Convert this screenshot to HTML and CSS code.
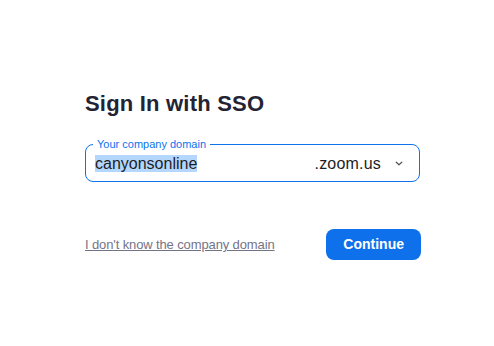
FILE: index.html
```html
<!DOCTYPE html>
<html>
<head>
<meta charset="utf-8">
<link rel="stylesheet" href="styles.css">
</head>
<body>
<main class="panel">
  <h1 class="title">Sign In with SSO</h1>
  <fieldset class="domain">
    <legend class="domain-label">Your company domain</legend>
    <div class="domain-row">
      <span class="domain-value"><span class="selected">canyonsonline</span></span>
      <span class="domain-suffix">.zoom.us</span>
      <svg class="chevron" width="8" height="5" viewBox="0 0 8 5" aria-hidden="true"><path d="M1.2 1.2l2.8 2.6 2.8-2.6" fill="none" stroke="#55555c" stroke-width="1.2" stroke-linecap="round" stroke-linejoin="round"/></svg>
    </div>
  </fieldset>
  <div class="actions">
    <a class="help-link" href="#">I don't know the company domain</a>
    <button class="continue" type="button">Continue</button>
  </div>
</main>
</body>
</html>
```

FILE: styles.css
```css
html, body {
  margin: 0;
  padding: 0;
  background: #ffffff;
}

body {
  font-family: "Liberation Sans", Arial, Helvetica, sans-serif;
  color: #232333;
}

.panel {
  width: 336px;
  margin: 0 0 0 85px;
  padding-top: 91px;
  display: flex;
  flex-direction: column;
}

.title {
  margin: 0;
  font-size: 22px;
  line-height: 26px;
  font-weight: 700;
  color: #232333;
  letter-spacing: 0.2px;
}

.domain {
  margin: 21px 1px 0 0;
  padding: 0 16px 4px 7px;
  border: 1px solid #0e72ed;
  border-radius: 8px;
  min-width: 0;
}

.domain-label {
  padding: 0 4px;
  font-size: 11px;
  line-height: 13px;
  color: #0e72ed;
}

.domain-row {
  display: flex;
  align-items: center;
  height: 26px;
  padding-left: 2px;
  font-size: 16px;
  line-height: 26px;
  color: #1d1d24;
}

.domain-value {
  flex: 1;
}

.selected {
  background: #b3d7ff;
}

.domain-suffix {
  color: #1d1d24;
  letter-spacing: 0.2px;
}

.chevron {
  margin-left: 14px;
  margin-top: -1px;
  display: block;
}

.actions {
  margin-top: 47px;
  display: flex;
  align-items: center;
  justify-content: space-between;
}

.help-link {
  font-size: 13px;
  line-height: 15px;
  color: #747487;
  text-decoration: underline;
  letter-spacing: -0.12px;
}

.continue {
  height: 31px;
  padding: 0 17px;
  border: 0;
  border-radius: 8px;
  background: #0e71eb;
  color: #ffffff;
  font-family: "Liberation Sans", Arial, Helvetica, sans-serif;
  font-size: 14px;
  font-weight: 700;
  line-height: 31px;
}
```
